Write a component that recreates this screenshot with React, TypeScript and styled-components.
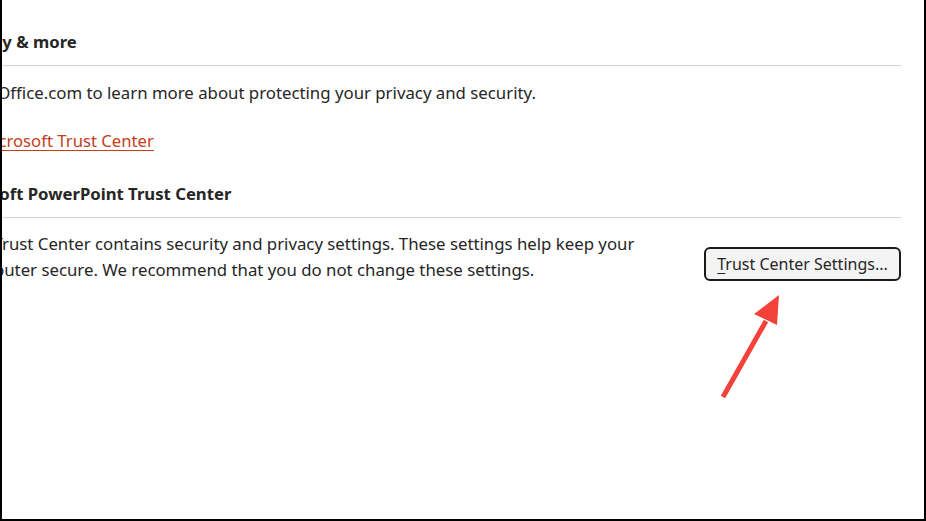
import styled, { createGlobalStyle } from "styled-components";

const GlobalStyle = createGlobalStyle`
  html, body {
    margin: 0;
    padding: 0;
    background: #ffffff;
  }
  body {
    font-family: "Noto Sans", "Open Sans", Arial, sans-serif;
    color: #262626;
  }
`;

const App: React.FC = () => {
  return (
    <>
      <GlobalStyle />
      <Panel>
        <Column>
          <Heading>Security &amp; more</Heading>
          <Divider />
          <Body>
            Visit Office.com to learn more about protecting your privacy and
            security.
          </Body>
          <LinkRow>
            <TrustLink href="#">Microsoft Trust Center</TrustLink>
          </LinkRow>
          <Heading $top={28}>Microsoft PowerPoint Trust Center</Heading>
          <Divider $after={13} />
          <Row>
            <Body $narrow>
              The Trust Center contains security and privacy settings. These
              settings help keep your computer secure. We recommend that you do
              not change these settings.
            </Body>
            <SettingsButton type="button">
              <Key>T</Key>rust Center Settings...
            </SettingsButton>
          </Row>
        </Column>
        <Arrow viewBox="0 0 80 110" aria-hidden="true">
          <line x1="3" y1="104" x2="46" y2="28" stroke="#f4423a" strokeWidth="5" />
          <polygon points="59,2 34,21 57,32" fill="#f4423a" />
        </Arrow>
      </Panel>
    </>
  );
};

export default App;

const Panel = styled.div`
  position: relative;
  width: 926px;
  height: 521px;
  box-sizing: border-box;
  border-left: 2px solid #000;
  border-right: 2px solid #000;
  border-bottom: 2px solid #000;
  background: #fff;
  overflow: hidden;
`;

const Column = styled.div`
  margin-left: -58px;
  width: 957px;
  padding-top: 30px;
`;

const Heading = styled.h2<{ $top?: number }>`
  margin: ${(p) => p.$top ?? 0}px 0 0 0;
  font-size: 16.7px;
  line-height: 24px;
  font-weight: 700;
  color: #262626;
  white-space: nowrap;
`;

const Divider = styled.div<{ $after?: number }>`
  height: 1px;
  background: #d4d4d4;
  margin: 11px 0 ${(p) => p.$after ?? 14}px 0;
`;

const Body = styled.p<{ $narrow?: boolean }>`
  margin: 0 0 0 16px;
  font-size: 16.8px;
  line-height: 26px;
  color: #262626;
  max-width: ${(p) => (p.$narrow ? "680px" : "none")};
`;

const LinkRow = styled.div`
  margin: 22px 0 0 35px;
  line-height: 26px;
`;

const TrustLink = styled.a`
  font-size: 16.7px;
  color: #c43e1c;
  text-decoration: underline;
  text-underline-offset: 3px;
`;

const Row = styled.div`
  display: flex;
  justify-content: space-between;
  align-items: flex-start;
`;

const SettingsButton = styled.button`
  margin-top: 16px;
  width: 197px;
  height: 34px;
  box-sizing: border-box;
  border: 2px solid #1a1a1a;
  border-radius: 6px;
  background: #f4f4f4;
  font-family: "Noto Sans", "Open Sans", Arial, sans-serif;
  font-size: 16px;
  color: #262626;
  padding: 0;
  white-space: nowrap;
`;

const Key = styled.span`
  text-decoration: underline;
  text-underline-offset: 3px;
`;

const Arrow = styled.svg`
  position: absolute;
  left: 718px;
  top: 293px;
  width: 80px;
  height: 110px;
`;
